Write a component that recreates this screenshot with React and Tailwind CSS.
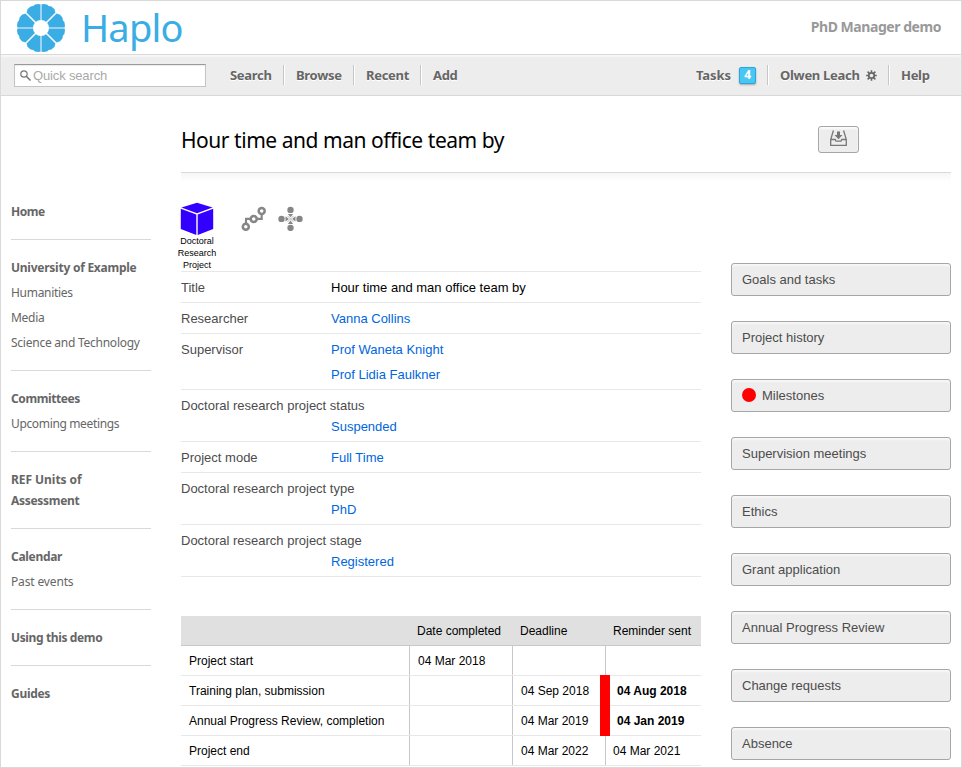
import React from "react";

const ubuntu = "font-['Noto_Sans',sans-serif]";

const sections = [
  { title: [["Home", "tracking-[-0.5px]"]], items: [] },
  {
    title: [["University of Example", "tracking-[-0.25px]"]],
    items: [["Humanities", "tracking-[-0.3px]"], ["Media", "tracking-[-0.3px]"], ["Science and Technology", "tracking-[-0.25px]"]],
  },
  { title: [["Committees", "tracking-[-0.4px]"]], items: [["Upcoming meetings", "tracking-[-0.35px]"]] },
  { title: [["REF Units of", "tracking-[-0.05px]"], ["Assessment", "tracking-[-0.3px]"]], items: [] },
  { title: [["Calendar", "tracking-[-0.3px]"]], items: [["Past events", "tracking-[-0.15px]"]] },
  { title: [["Using this demo", "tracking-[-0.37px]"]], items: [] },
  { title: [["Guides", "tracking-[-0.3px]"]], items: [] },
];

const fields = [
  { label: "Title", values: ["Hour time and man office team by"], plain: true },
  { label: "Researcher", values: ["Vanna Collins"] },
  { label: "Supervisor", values: ["Prof Waneta Knight", "Prof Lidia Faulkner"] },
  { label: "Doctoral research project status", values: ["Suspended"], wide: true },
  { label: "Project mode", values: ["Full Time"] },
  { label: "Doctoral research project type", values: ["PhD"], wide: true },
  { label: "Doctoral research project stage", values: ["Registered"], wide: true },
];

const milestones = [
  ["Project start", "04 Mar 2018", "", "", false],
  ["Training plan, submission", "", "04 Sep 2018", "04 Aug 2018", true],
  ["Annual Progress Review, completion", "", "04 Mar 2019", "04 Jan 2019", true],
  ["Project end", "", "04 Mar 2022", "04 Mar 2021", false],
];

const actions = [
  "Goals and tasks", "Project history", "Milestones", "Supervision meetings", "Ethics",
  "Grant application", "Annual Progress Review", "Change requests", "Absence",
];

function Logo() {
  return (
    <svg className="h-[48px] w-[48px]" viewBox="-24 -24 48 48">
      {[0, 90, 180, 270].map((a) => (
        <g key={a} transform={`rotate(${a})`} fill="#3aade4">
          <path d="M0 0V-23.2L2.2 -24L6 -23.4L7.6 -22L10.4 -21.4L13.6 -18.8L14 -16.6L15 -15L0 0Z" />
          <path transform="scale(-1 1)" d="M0 0V-23.2L2.2 -24L6 -23.4L7.6 -22L10.4 -21.4L13.6 -18.8L14 -16.6L15 -15L0 0Z" />
        </g>
      ))}
      <path stroke="#b9dcf2" strokeWidth="1.6" d="M0 -24V-8M0 8V24M-24 0H-8M8 0H24" />
      <path stroke="#fff" strokeWidth="1.5" d="M-18 -18L-5 -5M5 5L18 18M18 -18L5 -5M-5 5L-18 18" />
      <circle r="8" fill="#fff" />
    </svg>
  );
}

function Sep() {
  return <div className="h-5 w-[2px] border-l border-[#c6c6c6] bg-white" />;
}

function Header() {
  return (
    <header className="flex h-[54px] shrink-0 items-start justify-between border-b border-[#d9d9d9] pl-[16px] pr-[20px]">
      <div className="flex items-start pt-[3px]">
        <Logo />
        <span className={`${ubuntu} -mt-px ml-[16px] text-[38px] leading-[48px] tracking-[-0.8px] text-[#3aade4]`}>Haplo</span>
      </div>
      <span className={`${ubuntu} mt-[16px] text-[14px] font-bold leading-5 tracking-[-0.45px] text-[#999]`}>PhD Manager demo</span>
    </header>
  );
}

function Toolbar() {
  return (
    <nav className={`${ubuntu} flex h-[41px] shrink-0 items-center border-b border-[#d9d9d9] bg-[#ededed] pl-[13px] text-[13px] font-bold tracking-[-0.3px] text-[#666] shadow-[inset_0_2px_2px_rgba(255,255,255,0.6)] [text-shadow:0_1px_0_#fff]`}>
      <div className="flex h-[23px] w-[192px] items-center border border-[#c4c4c4] border-t-[#999] bg-white pl-[5px] shadow-[inset_0_1px_1px_rgba(0,0,0,0.08)]">
        <svg className="mt-px h-3 w-3" viewBox="0 0 12 12" fill="none" stroke="#777">
          <circle cx="4" cy="4" r="3.2" strokeWidth="1.2" />
          <path d="M6.3 6.3L10.5 10.5" strokeWidth="1.6" />
        </svg>
        <span className="ml-[1px] pt-[2px] font-['Liberation_Sans',sans-serif] text-[13px] font-normal tracking-[-0.15px] text-[#a9a9a9]">Quick search</span>
      </div>
      <span className="ml-[24px] w-[53px] whitespace-nowrap pt-[2px]">Search</span><Sep />
      <span className="ml-[11px] w-[57px] whitespace-nowrap pt-[2px]">Browse</span><Sep />
      <span className="ml-[11px] w-[54px] whitespace-nowrap pt-[2px]">Recent</span><Sep />
      <span className="ml-[11px] pt-[2px]">Add</span>
      <div className="ml-auto flex items-center">
        <span className="w-[43px] whitespace-nowrap pt-[2px] tracking-[-0.1px]">Tasks</span>
        <span className="mr-[11px] flex h-[17px] w-[17px] items-center justify-center rounded-[2px] border border-[#2ba6d8] bg-[#48c6f4] text-[12px] text-white shadow-[0_1px_2px_rgba(0,0,0,0.3)] [text-shadow:none]">4</span>
        <Sep />
        <span className="ml-[11px] w-[86px] whitespace-nowrap pt-[2px]">Olwen Leach</span>
        <svg className="mr-[11px] mt-px h-[11px] w-[11px]" viewBox="-5.5 -5.5 11 11" stroke="#666" fill="none">
          <circle r="2.7" strokeWidth="1.8" />
          <path d="M0 -5.3V-3M0 5.3V3M-5.3 0H-3M5.3 0H3M-3.9 -3.9L-2 -2M3.9 3.9L2 2M3.9 -3.9L2 -2M-3.9 3.9L-2 2" strokeWidth="1.6" />
        </svg>
        <Sep />
        <span className="ml-[11px] w-[60px] whitespace-nowrap pt-[2px]">Help</span>
      </div>
    </nav>
  );
}

function Sidebar() {
  return (
    <aside className={`${ubuntu} w-[140px] shrink-0 pt-[105px] text-[12px] leading-[21px] text-[#666]`}>
      {sections.map((s, i) => (
        <div key={i} className={i ? "border-t border-[#d9d9d9] py-[17px]" : "pb-[17px]"}>
          <div className="flex flex-col items-start font-bold">
            {s.title.map(([t, c]) => <span key={t} className={`${c} whitespace-nowrap`}>{t}</span>)}
          </div>
          {s.items.map(([t, c]) => <div key={t} className="mt-1 flex"><span className={`${c} whitespace-nowrap`}>{t}</span></div>)}
        </div>
      ))}
    </aside>
  );
}

function TypeIcons() {
  return (
    <div className="flex h-[69px] items-start">
      <div className="-ml-1 flex w-10 flex-col items-center">
        <svg className="h-[33px] w-[34px]" viewBox="0 0 34 33" fill="#30f">
          <path d="M17 0.8L32.6 5.4L17 11.2L1.4 5.4Z" />
          <path d="M0.8 6.8L16.3 12.5V33L0.8 27Z" />
          <path d="M33.2 6.8L17.7 12.5V33L33.2 27Z" />
        </svg>
        <div className="text-center text-[9px] leading-3 text-black">Doctoral<br />Research<br />Project</div>
      </div>
      <svg className="ml-[24px] mt-[4px] h-[25px] w-[25px]" viewBox="0 0 25 25" fill="none" stroke="#868686">
        <path d="M5 18V12.9H9M16 12.9H20.7V7" strokeWidth="2.1" />
        <circle cx="4.8" cy="20.7" r="3" strokeWidth="2.5" />
        <circle cx="12.7" cy="12.9" r="3" strokeWidth="2.5" />
        <circle cx="20.7" cy="4.9" r="3" strokeWidth="2.5" />
      </svg>
      <svg className="ml-[12px] mt-[4px] h-[25px] w-[25px]" viewBox="-12.5 -12.9 25 25" fill="#868686">
        {[0, 90, 180, 270].map((a) => (
          <g key={a} transform={`rotate(${a})`}>
            <circle cy="-9" r="3.2" />
            <path d="M-2.6 -5H2.6L0 -1.6Z" />
          </g>
        ))}
        <path d="M-3 -3L3 3M3 -3L-3 3" stroke="#999" strokeWidth="0.7" />
      </svg>
    </div>
  );
}

function Fields() {
  return (
    <div className="border-b border-[#e8e8e8]">
      {fields.map((f) => (
        <div key={f.label} className={`flex border-t border-[#e8e8e8] pb-1 pt-[5px] leading-[21px] ${f.wide ? "flex-col" : ""}`}>
          <div className="w-[150px] shrink-0 whitespace-nowrap text-[#4c4c4c]">{f.label}</div>
          <div className={`flex flex-col gap-1 ${f.wide ? "pl-[150px]" : ""} ${f.plain ? "text-black" : "text-[#0066dd]"}`}>
            {f.values.map((v) => <span key={v}>{v}</span>)}
          </div>
        </div>
      ))}
    </div>
  );
}

function Milestones() {
  const cols = "grid grid-cols-[228px_103px_93px_96px]";
  return (
    <div className="mt-[39px] text-[12px] text-black">
      <div className={`${cols} h-[30px] items-center border-b border-[#c8c8c8] bg-[#e0e0e0]`}>
        <span />
        <span className="pl-2">Date completed</span>
        <span className="pl-2">Deadline</span>
        <span className="pl-2">Reminder sent</span>
      </div>
      {milestones.map(([name, done, due, sent, late]) => (
        <div key={name} className={`${cols} h-[30px] border-b border-[#e8e8e8] leading-[30px]`}>
          <span className="h-[29px] pl-2">{name}</span>
          <span className="h-[29px] border-l border-[#c8c8c8] pl-2">{done}</span>
          <span className="h-[29px] border-l border-[#c8c8c8] pl-2">{due}</span>
          {late ? (
            <span className="-ml-[5px] -mt-px h-[31px] border-l-[10px] border-[#f00] pl-[7px] pt-px font-bold">{sent}</span>
          ) : (
            <span className="h-[29px] border-l border-[#c8c8c8] pl-[7px]">{sent}</span>
          )}
        </div>
      ))}
    </div>
  );
}

export default function App() {
  return (
    <div className="flex h-[768px] w-[962px] flex-col overflow-hidden border border-[#d9d9d9] bg-white font-['Liberation_Sans',Arial,sans-serif] text-[13px]">
      <Header />
      <Toolbar />
      <div className="flex min-h-0 flex-1 pl-[10px]">
        <Sidebar />
        <main className="ml-[30px] w-[770px] shrink-0">
          <div className="flex h-[77px] items-start justify-between border-b border-[#d9d9d9]">
            <h1 className={`${ubuntu} mt-[30px] whitespace-nowrap text-[21px] leading-[28px] tracking-[-0.46px] text-black`}>Hour time and man office team by</h1>
            <button className="mr-[92px] mt-[30px] flex h-[27px] w-[41px] justify-center rounded-[3px] border border-[#a6a6a6] bg-[#ededed] pt-[3px] shadow-[inset_0_2px_2px_rgba(255,255,255,0.8)]">
              <svg className="h-[17px] w-[17px]" viewBox="0 0 17 17" fill="none" stroke="#777" strokeWidth="1.3">
                <path d="M3.4 0.5L0.7 9.5V15.4H16.3V9.5L13.6 0.5M0.7 9.5H5.2L6 11.2H11L11.8 9.5H16.3" />
                <path d="M7 1.5H10V5H12.5L8.5 9.3L4.5 5H7Z" fill="#777" stroke="none" />
              </svg>
            </button>
          </div>
          <div className="h-[9px] bg-gradient-to-b from-[#f6f6f6] to-white" />
          <div className="flex">
            <div className="w-[520px] shrink-0 pt-[20px]">
              <TypeIcons />
              <Fields />
              <Milestones />
            </div>
            <div className="ml-[30px] flex w-[220px] flex-col gap-[25px] pt-[81px]">
              {actions.map((a) => (
                <button key={a} className="flex h-[33px] shrink-0 items-center rounded-[3px] border border-[#a6a6a6] bg-[#ededed] pl-[10px] text-[#4c4c4c] shadow-[inset_0_2px_2px_rgba(255,255,255,0.6)]">
                  {a === "Milestones" && <span className="-mt-px mr-[6px] h-[14px] w-[14px] rounded-full bg-[#f00]" />}
                  {a}
                </button>
              ))}
            </div>
          </div>
        </main>
      </div>
    </div>
  );
}
